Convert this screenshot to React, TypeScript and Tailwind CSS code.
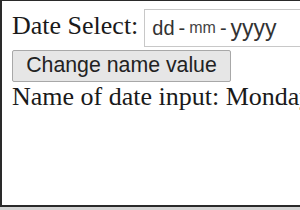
export default function App() {
  return (
    <div className="w-[300px] h-[210px] bg-[#d4d4d4] overflow-hidden">
      <div className="w-[300px] h-[207px] bg-white border-l-2 border-t border-b-2 border-[#2a2a2a] overflow-hidden">
        <div className="pl-[10px] pt-[8px] flex flex-col">
          <div className="flex items-end h-[38px] whitespace-nowrap">
            <span
              className="text-[26px] leading-none text-[#1a1a1a] mb-[8px] mr-[6px]"
              style={{ fontFamily: '"Liberation Serif", "Times New Roman", serif' }}
            >
              Date Select:
            </span>
            <div
              className="h-[38px] w-[200px] shrink-0 border border-[#c8c8c8] bg-white flex items-center pl-[7px] text-[#333]"
              style={{ fontFamily: '"Liberation Sans", Arial, sans-serif' }}
            >
              <span className="text-[20px]">dd</span>
              <span className="text-[20px] mx-[4px]">-</span>
              <span className="text-[16px] text-[#444]">mm</span>
              <span className="text-[20px] mx-[4px]">-</span>
              <span className="text-[23px]">yyyy</span>
            </div>
          </div>
          <div className="mt-[3px]">
            <div
              className="inline-flex items-center justify-center h-[32px] w-[219px] border border-[#a8a8a8] bg-[#e6e6e6] text-[21.3px] text-[#222] rounded-[2px]"
              style={{ fontFamily: '"Liberation Sans", Arial, sans-serif' }}
            >
              Change name value
            </div>
          </div>
          <div
            className="text-[26px] leading-[28px] text-[#1a1a1a] whitespace-nowrap mt-[1px]"
            style={{ fontFamily: '"Liberation Serif", "Times New Roman", serif' }}
          >
            Name of date input: Monday
          </div>
        </div>
      </div>
    </div>
  );
}
